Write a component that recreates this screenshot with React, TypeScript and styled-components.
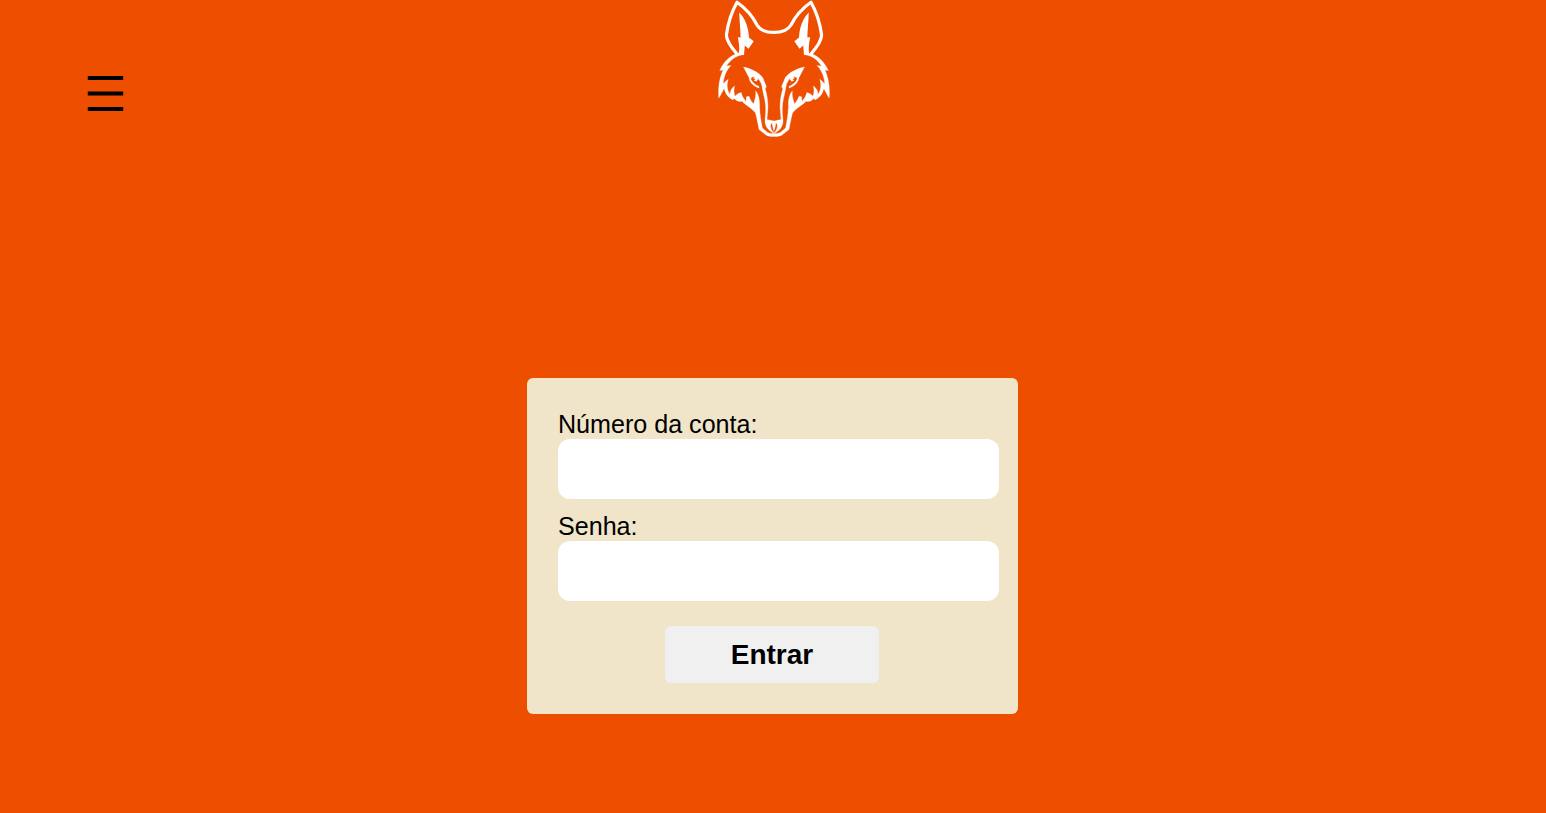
import React from "react";
import styled, { createGlobalStyle } from "styled-components";

const GlobalStyle = createGlobalStyle`
  * { box-sizing: border-box; }
  body { margin: 0; background: #ed4e00; font-family: Arial, "Liberation Sans", sans-serif; }
`;

const Page = styled.div`
  display: flex;
  flex-direction: column;
  align-items: center;
  min-height: 100vh;
  background: #ed4e00;
`;

const Header = styled.header`
  display: grid;
  grid-template-columns: 1fr 120px 1fr;
  width: 100%;
  height: 140px;
  padding-left: 2px;
`;

const MenuButton = styled.button`
  justify-self: start;
  align-self: start;
  margin: 75px 0 0 85px;
  padding: 0;
  border: 0;
  background: none;
  line-height: 0;
`;

const LoginCard = styled.form`
  display: flex;
  flex-direction: column;
  width: 491px;
  height: 336px;
  margin: 238px 1px 0 0;
  padding: 32px 19px 31px 31px;
  border-radius: 6px;
  background: #f0e5c8;
`;

const Field = styled.label`
  display: block;
  height: 102px;
  font-size: 25.1px;
  line-height: 29px;
  color: #000;
`;

const Input = styled.input`
  display: block;
  width: 441px;
  height: 60px;
  padding: 0 12px;
  border: 0;
  border-radius: 12px;
  background: #fff;
  font: inherit;
`;

const SubmitButton = styled.button`
  width: 214px;
  height: 57px;
  margin: 12px 0 0 107px;
  padding: 0;
  border: 0;
  border-radius: 6px;
  background: #f0f0f0;
  color: #000;
  font: bold 28px Arial, "Liberation Sans", sans-serif;
`;

const MenuIcon = () => (
  <svg width="40" height="38" viewBox="0 0 40 38">
    <path d="M.8 1h35.4v4H.8zM.8 16.4h35.4v4.2H.8zM.8 32h35.4v4H.8z" fill="#000" />
  </svg>
);

const HalfFace = () => (
  <>
    <path
      d="M60 32.4C51 32.4 46 30 43 25C39 17 34 10 23 2.3C17 13 14 23 12.4 35C12.4 41 17 47 23 54"
      fill="none"
      stroke="#fff"
      strokeWidth="3.2"
      strokeLinejoin="round"
    />
    <path d="M25.2 12.5C31 18 34.5 27 35 37.5L39.7 41.2L34.5 48.8L30.8 45.5L30 55L24.7 54.5C25.8 48 25 43 23.8 37.2L26.6 37.6C26.5 29 25.5 22 25.2 12.5Z" fill="#fff" />
    <path
      d="M28 52.5C17 54 10 61 5.7 70.5L9 70C6 77 3.8 86 4.8 98.2L10.2 88.5C11.5 94 14 97.5 19 99.8L20.5 98.5C22 101 25 102 28 101.2C31 105 38 108 41.5 113C43 119 44 124 45 129.5L51 134.2Q53 136.6 60 136.6V133.6Q55 133.6 53 132L48.4 128C47 121 45.8 114 45.6 107C45.8 102 45.3 95 41.6 90.8C42.5 97 40 101 39.6 104C37 101 36 99 35 96.2L32.4 96.8L32 101.7C29.5 98.5 28 96 27.2 92.6C25 93 22.5 94.5 21 96.3C19.5 92 20 89 20.6 86C17.5 88 16 91 16 94.4C13 90 12.5 85 14.2 79.3C12.5 80.5 11 82 9.3 84C9.5 77 12.5 70 17 65.6L12.6 66C17 59 22 56 29 54.7Z"
      fill="#fff"
      stroke="#fff"
      strokeWidth=".3"
    />
    <path
      fillRule="evenodd"
      d="M29.5 67C36 68.5 43.5 71 48.7 77.5L52.4 86.5L51.2 89C53 94 53.8 100 54 107L53 119.5L60 121V133.5C55 131 50.5 127 51 119.5C52 112 52 105 50.6 99C49.5 94 48.5 90 47.5 84L45 79.5C42 76.5 39 76 37 78C36.5 81 41 84.5 45 86.5V88C39 86 35.5 82 35 77.5Z"
      fill="#fff"
      stroke="#fff"
      strokeWidth=".3"
    />
    <path d="M39 77.8L42.5 76.8L44.2 79.2L42.4 81.6L39.7 80.6L41.3 79.6Z" fill="#fff" />
    <path d="M57.8 123.5C56 126 57.5 129.5 59.7 132.5C59.8 130 58 127 57.8 123.5Z" fill="#ed4e00" stroke="#ed4e00" strokeWidth=".5" />
  </>
);

const WolfLogo = () => (
  <svg width="120" height="140" viewBox="0 0 120 140">
    <HalfFace />
    <g transform="translate(120 0) scale(-1 1)">
      <HalfFace />
    </g>
  </svg>
);

export default function App() {
  return (
    <Page>
      <GlobalStyle />
      <Header>
        <MenuButton type="button" aria-label="Menu">
          <MenuIcon />
        </MenuButton>
        <WolfLogo />
      </Header>
      <LoginCard>
        <Field>
          Número da conta:
          <Input type="text" />
        </Field>
        <Field>
          Senha:
          <Input type="password" />
        </Field>
        <SubmitButton type="button">Entrar</SubmitButton>
      </LoginCard>
    </Page>
  );
}
